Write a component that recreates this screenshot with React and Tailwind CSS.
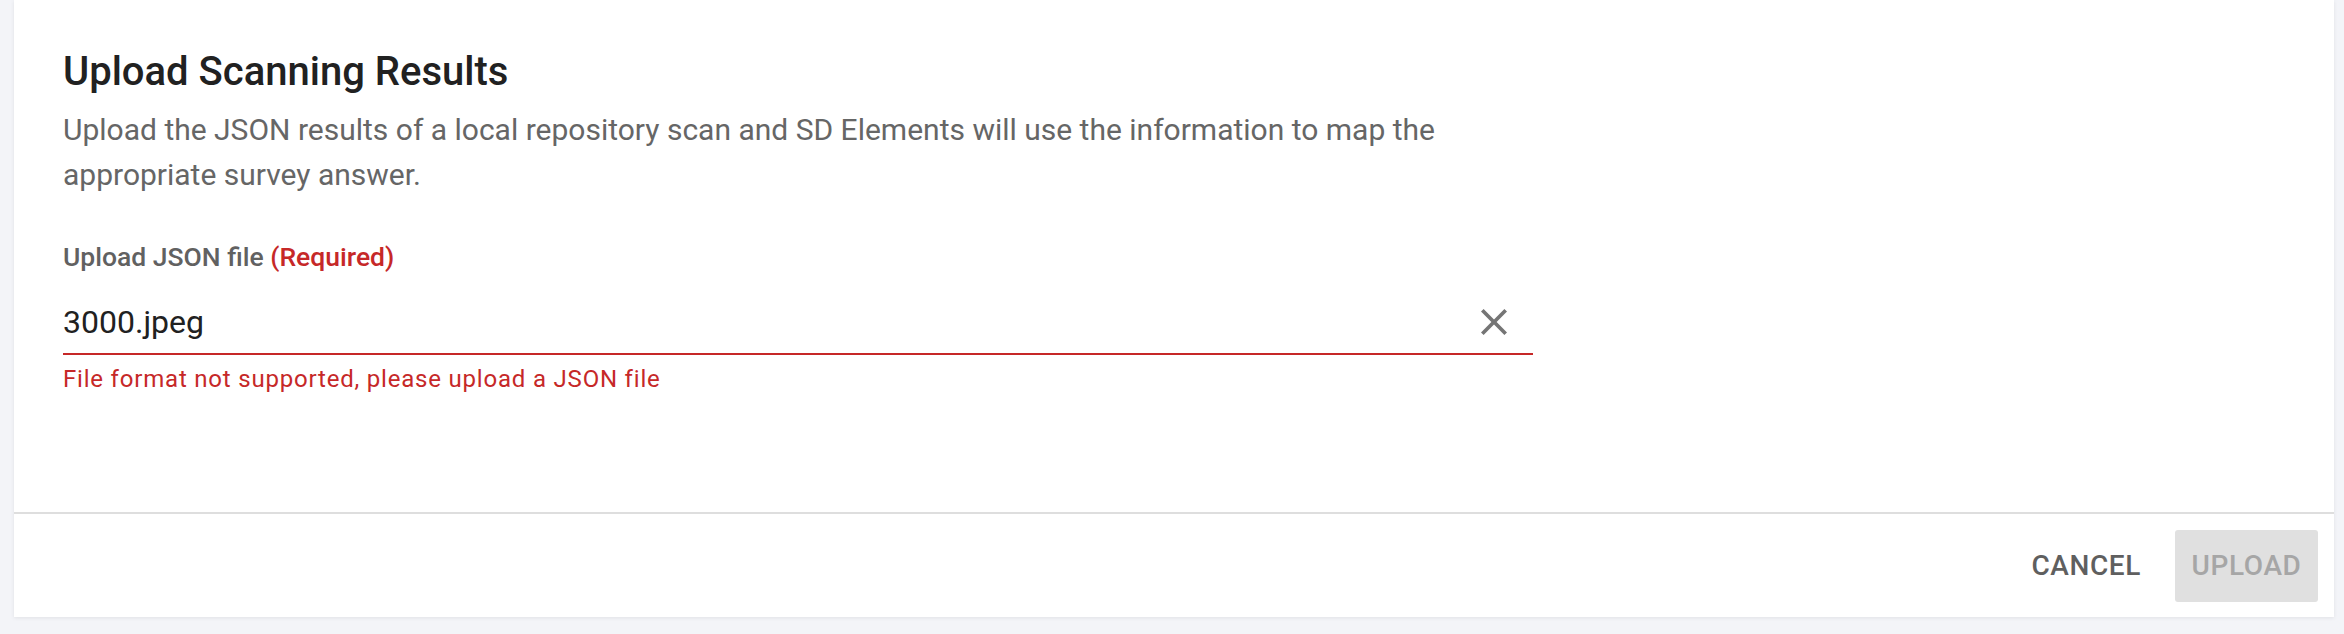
import React from 'react';

const font = { fontFamily: 'Roboto, "Liberation Sans", sans-serif' };

function CloseIcon() {
  return (
    <svg viewBox="5 5 14 14" className="w-[26px] h-[26px]" fill="#757575">
      <path d="M19 6.41 17.59 5 12 10.59 6.41 5 5 6.41 10.59 12 5 17.59 6.41 19 12 13.41 17.59 19 19 17.59 13.41 12z" />
    </svg>
  );
}

export default function App() {
  return (
    <div className="min-h-screen bg-[#f3f4f8] pl-[14px] pr-[10px] pb-[17px]" style={font}>
      <div className="bg-white shadow-[0_1px_4px_rgba(0,0,0,0.08)]">

        {/* Body */}
        <div className="pl-[49px] pt-[52px] h-[512px]">
          <h2 className="text-[40px] leading-[40px] font-medium text-[#212121]">
            Upload Scanning Results
          </h2>
          <p className="mt-[15px] w-[1440px] text-[30px] leading-[45px] text-[#666666]">
            Upload the JSON results of a local repository scan and SD Elements will use the information to map the appropriate survey answer.
          </p>

          <label className="block mt-[44px] text-[26.5px] leading-[32px] font-medium text-[#616161]">
            Upload JSON file <span className="text-[#c62828]">(Required)</span>
          </label>

          {/* File input */}
          <div className="mt-[27px] w-[1470px] flex items-center justify-between border-b-2 border-[#c62828] pb-[9px]">
            <span className="text-[32px] leading-[44px] text-[#212121]">3000.jpeg</span>
            <button className="mr-[26px] flex items-center">
              <CloseIcon />
            </button>
          </div>
          <p className="mt-[10px] text-[24px] leading-[28px] tracking-[0.8px] text-[#c62828]">
            File format not supported, please upload a JSON file
          </p>
        </div>

        {/* Footer */}
        <div className="border-t-2 border-[#dedede] h-[105px] flex items-center justify-end pr-[16px] gap-[6px]">
          <button className="h-[72px] px-[28px] text-[28px] font-medium tracking-[0.6px] text-[#5f5f5f] uppercase rounded-[3px]">
            Cancel
          </button>
          <button disabled className="h-[72px] w-[143px] text-[28px] font-medium tracking-[0.6px] text-[#a6a6a6] bg-[#e0e0e0] uppercase rounded-[3px]">
            Upload
          </button>
        </div>
      </div>
    </div>
  );
}
